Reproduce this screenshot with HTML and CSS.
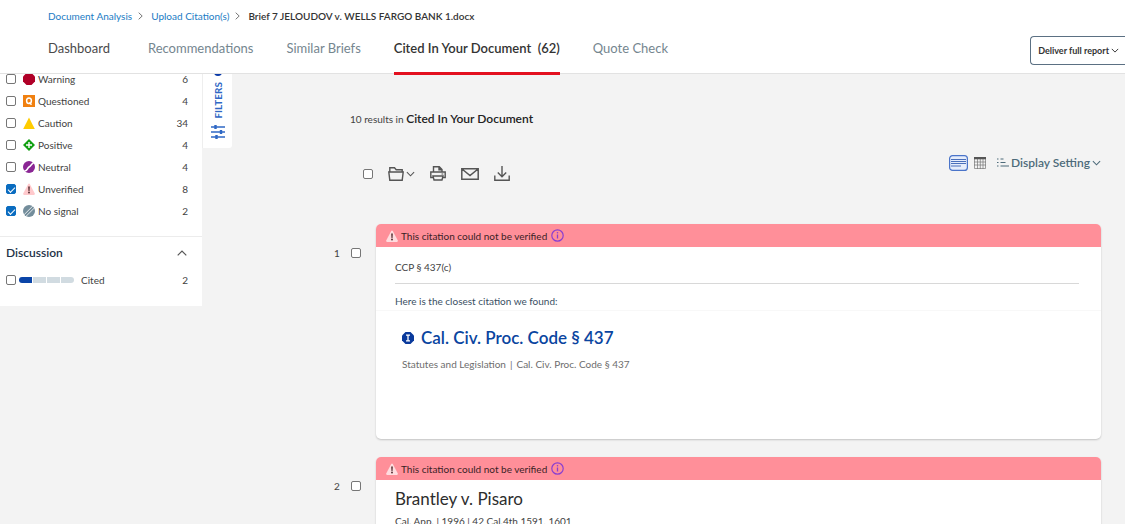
FILE: index.html
```html
<!DOCTYPE html>
<html lang="en">
<head>
<meta charset="utf-8">
<meta name="viewport" content="width=device-width, initial-scale=1">
<title>Brief Analysis - Cited In Your Document</title>
<link rel="stylesheet" href="styles.css">
</head>
<body>
<svg class="defs" aria-hidden="true">
  <symbol id="alert" viewBox="0 0 12 12"><path class="alert-shape" d="M5.2.9Q6 0 6.8.9L11.8 10.600Q12 12 11 12H1Q0 12 .2 10.600Z"/><path d="M5.200 3.500h1.600l-.3 4.500h-1z" fill="#4a2428"/><circle cx="6" cy="9.500" r=".9" fill="#4a2428"/></symbol>
  <symbol id="down" viewBox="0 0 10 6"><path d="M1 1l4 4 4-4" fill="none" stroke="currentColor" stroke-width="1.200"/></symbol>
  <symbol id="info" viewBox="0 0 13 13"><circle cx="6.500" cy="6.500" r="5.700" fill="none" stroke="#8a3fd0" stroke-width="1.200"/><path d="M6.500 5.600v4" stroke="#8a3fd0" stroke-width="1.300"/><circle cx="6.500" cy="3.800" r=".8" fill="#8a3fd0"/></symbol>
</svg>

<header class="header">
  <nav class="crumbs" aria-label="Breadcrumb">
    <a href="#">Document Analysis</a>
    <svg class="crumb-sep" viewBox="0 0 5 8"><path d="M.7.7L4.200 4 .7 7.300" fill="none" stroke="#777"/></svg>
    <a href="#">Upload Citation(s)</a>
    <svg class="crumb-sep" viewBox="0 0 5 8"><path d="M.7.7L4.200 4 .7 7.300" fill="none" stroke="#777"/></svg>
    <span class="crumb-current">Brief 7 JELOUDOV v. WELLS FARGO BANK 1.docx</span>
  </nav>
  <div class="header-row">
    <nav class="tabs" aria-label="Sections">
      <a class="tab tab-dark" href="#">Dashboard</a>
      <a class="tab" href="#">Recommendations</a>
      <a class="tab" href="#">Similar Briefs</a>
      <a class="tab tab-active" href="#" aria-current="page">Cited In Your Document &nbsp;(62)</a>
      <a class="tab" href="#">Quote Check</a>
    </nav>
    <button class="deliver" type="button">Deliver full report <svg class="chev-small"><use href="#down"/></svg></button>
  </div>
</header>

<div class="page">
  <aside class="sidebar">
    <ul class="filters">
      <li><label class="filter"><input class="check" type="checkbox"><svg class="signal" viewBox="0 0 12 12"><path d="M3.500 0h5L12 3.500v5L8.500 12h-5L0 8.500v-5z" fill="#b00028"/></svg><span>Warning</span><span class="count">6</span></label></li>
      <li><label class="filter"><input class="check" type="checkbox"><svg class="signal" viewBox="0 0 12 12"><path d="M0 0h12v12H0z" fill="#f08010"/><ellipse cx="6" cy="5.800" rx="2.400" ry="2.800" fill="none" stroke="#fff" stroke-width="1.500"/><path d="M6.300 7.500l2.200 2.300" stroke="#fff" stroke-width="1.400"/></svg><span>Questioned</span><span class="count">4</span></label></li>
      <li><label class="filter"><input class="check" type="checkbox"><svg class="signal" viewBox="0 0 12 12"><path d="M6 .5L11.800 12H.2z" fill="#fc0"/></svg><span>Caution</span><span class="count">34</span></label></li>
      <li><label class="filter"><input class="check" type="checkbox"><svg class="signal" viewBox="0 0 12 12"><path d="M6 0l6 6-6 6-6-6z" fill="#12a012"/><path d="M6 3v6M3 6h6" stroke="#fff" stroke-width="1.400"/></svg><span>Positive</span><span class="count">4</span></label></li>
      <li><label class="filter"><input class="check" type="checkbox"><svg class="signal" viewBox="0 0 12 12"><circle cx="6" cy="6" r="6" fill="#8a2594"/><path d="M1 10.500C5.500 9.500 4 7 6 6s2.500-3.500 5-4.500" fill="none" stroke="#fff" stroke-width="1.500"/></svg><span>Neutral</span><span class="count">4</span></label></li>
      <li><label class="filter"><input class="check" type="checkbox" checked><svg class="signal alert-pale"><use href="#alert"/></svg><span>Unverified</span><span class="count">8</span></label></li>
      <li><label class="filter"><input class="check" type="checkbox" checked><svg class="signal" viewBox="0 0 12 12"><circle cx="6" cy="6" r="6" fill="#738d9b"/><path d="M1 9.800L9.800 1M2.800 11.500l8.500-8.500" stroke="#fff" stroke-width=".8"/></svg><span>No signal</span><span class="count">2</span></label></li>
    </ul>
    <section class="discussion">
      <h2 class="discussion-head">Discussion
        <button class="collapse" type="button" aria-label="Collapse discussion"><svg class="chev-up" viewBox="0 0 10 6"><path d="M.7 5.300L5 1l4.300 4.300" fill="none" stroke="#555" stroke-width="1.200"/></svg></button>
      </h2>
      <label class="filter filter-meter"><input class="check" type="checkbox"><span class="meter"><i class="on"></i><i></i><i></i><i></i></span><span>Cited</span><span class="count">2</span></label>
    </section>
  </aside>

  <button class="filters-tab" type="button">
    <span class="filters-dot"></span>
    <span class="filters-text">FILTERS</span>
    <svg class="sliders" viewBox="0 0 14 14"><path d="M0 2h14M0 7h14M0 12h14" stroke="#2f68c5" stroke-width="1.400"/><path d="M4.500 0v4M10 5v4M5.500 10v4" stroke="#2f68c5" stroke-width="2.400"/></svg>
  </button>

  <main class="main">
    <h1 class="results">10 results in <strong>Cited In Your Document</strong></h1>
    <div class="toolbar">
      <div class="actions">
        <input class="check" type="checkbox" aria-label="Select all">
        <button class="tool tool-folder" type="button" aria-label="Save to folder"><svg class="i-folder" viewBox="0 0 16 14"><path d="M1.800 5V.8h4.700l1.700 2h6V5M.8 5h14.400l-1 8.200H1.800z" fill="none" stroke="currentColor" stroke-width="1.400"/></svg><svg class="chev"><use href="#down"/></svg></button>
        <button class="tool" type="button" aria-label="Print"><svg class="i-print" viewBox="0 0 16 15"><path d="M3.500 6V.8h5.800L12 3.500V6M9 .8v3h3M2.800 11.500H.8V6h14.400v5.500h-2M3 10h10l-1 4H4z" fill="none" stroke="currentColor" stroke-width="1.400"/><path d="M11.500 8h1.800" stroke="currentColor"/></svg></button>
        <button class="tool" type="button" aria-label="Email"><svg class="i-mail" viewBox="0 0 18 12"><path d="M.8.8h16.400v10.400H.8zM1 1l8 6.500L17 1" fill="none" stroke="currentColor" stroke-width="1.500"/></svg></button>
        <button class="tool" type="button" aria-label="Download"><svg class="i-down" viewBox="0 0 16 15"><path d="M8 0v10.500M3.800 6.500L8 10.700l4.200-4.200M.8 9.500v4.700h14.400V9.500" fill="none" stroke="currentColor" stroke-width="1.400"/></svg></button>
      </div>
      <div class="views">
        <button class="view" type="button" aria-label="List view" aria-pressed="true"><svg class="i-list" viewBox="0 0 19 16"><rect x=".6" y=".6" width="17.800" height="14.800" rx="3" fill="#e6edfb" stroke="#4a74c9" stroke-width="1.200"/><path d="M2 4.500h15M2 6.500h15M2 8.500h15M2 11h10" stroke="#4a6fba"/></svg></button>
        <button class="view" type="button" aria-label="Table view"><svg class="i-grid" viewBox="0 0 12 12"><path d="M.5.5h11v11H.5zM0 5h12M0 8h12M3.500 2v10M6.300 2v10M9 2v10" fill="none" stroke="#777" stroke-width=".7"/><path d="M0 0h12v2.300H0z" fill="#555"/></svg></button>
        <button class="display" type="button"><svg class="i-lines" viewBox="0 0 12 10"><path d="M0 1h1.500M0 4.500h1.500M0 8h1.500M3.500 1h3M3.500 4.500h5M3.500 8H12" stroke="currentColor" stroke-width="1.200"/></svg>Display Setting<svg class="chev"><use href="#down"/></svg></button>
      </div>
    </div>

    <ol class="list">
      <li class="item">
        <label class="pick"><span class="num">1</span><input class="check" type="checkbox"></label>
        <article class="card">
          <div class="banner"><svg class="signal alert-light"><use href="#alert"/></svg>This citation could not be verified<button class="info" type="button" aria-label="More information"><svg class="i-info"><use href="#info"/></svg></button></div>
          <div class="original">
            <p class="cite">CCP § 437(c)</p>
            <p class="closest">Here is the closest citation we found:</p>
          </div>
          <div class="match">
            <h2 class="match-title"><svg class="signal" viewBox="0 0 12 12"><path d="M3.500 0h5L12 3.500v5L8.500 12h-5L0 8.500v-5z" fill="#0a3a9c"/><path d="M4 3.200h4M4 8.800h4M6 3.200v5.600" stroke="#fff" stroke-width="1.300"/></svg><a href="#">Cal. Civ. Proc. Code § 437</a></h2>
            <p class="meta"><span>Statutes and Legislation</span><span>|</span><span>Cal. Civ. Proc. Code § 437</span></p>
          </div>
        </article>
      </li>
      <li class="item">
        <label class="pick"><span class="num">2</span><input class="check" type="checkbox"></label>
        <article class="card">
          <div class="banner"><svg class="signal alert-light"><use href="#alert"/></svg>This citation could not be verified<button class="info" type="button" aria-label="More information"><svg class="i-info"><use href="#info"/></svg></button></div>
          <div class="case">
            <h2 class="case-title">Brantley v. Pisaro</h2>
            <p class="case-meta">Cal. App. | 1996 | 42 Cal.4th 1591, 1601</p>
          </div>
        </article>
      </li>
    </ol>
  </main>
</div>
</body>
</html>
```
FILE: styles.css
```css
* { box-sizing: border-box; }
body {
  margin: 0;
  height: 100vh;
  display: flex;
  flex-direction: column;
  overflow: hidden;
  background: #f3f3f3;
  color: #424242;
  font: 10px/16px Lato, "Open Sans", sans-serif;
}
h1, h2, p, ul, ol { margin: 0; padding: 0; font-weight: 400; }
ul, ol { list-style: none; }
a { color: inherit; text-decoration: none; }
button { border: 0; padding: 0; background: none; color: inherit; font: inherit; display: flex; align-items: center; }
svg { display: block; flex: none; }
.defs { position: absolute; width: 0; height: 0; }

.header {
  flex: none;
  position: relative;
  z-index: 1;
  background: #fff;
  border-bottom: 1px solid #e2e2e2;
  padding-left: 48px;
}
.crumbs { display: flex; align-items: center; padding-top: 8px; color: #1a7bc4; }
.crumb-sep { width: 5px; height: 8px; margin: 0 8px 0 6px; }
.crumb-current { color: #333; font-weight: 600; }
.header-row { display: flex; justify-content: space-between; height: 49px; }
.tabs { display: flex; gap: 33px; margin-bottom: -2px; }
.tab { padding-top: 15px; font-size: 13px; line-height: 18px; color: #75868f; white-space: nowrap; }
.tab-dark { color: #4a4a4a; }
.tab-dark + .tab { margin-left: 5px; }
.tab-active { color: #333; font-weight: 600; border-bottom: 3px solid #e3101f; }
.deliver {
  align-self: flex-start;
  height: 29px;
  margin-top: 12px;
  padding: 0 6px 0 7px;
  gap: 2px;
  border: 1px solid #5b7083;
  border-right: 0;
  border-radius: 4px 0 0 4px;
  font-size: 9px;
  font-weight: 700;
  color: #333;
}
.chev-small { width: 8px; height: 5px; }
.chev { width: 9px; height: 6px; }

.page { flex: 1; min-height: 0; display: flex; align-items: flex-start; }
.sidebar { flex: none; width: 202px; margin-top: -6px; background: #fff; }
.filters { padding-bottom: 14px; }
.filter { display: flex; align-items: center; height: 22px; padding: 0 14px 0 6px; }
.count { margin-left: auto; }
.signal { width: 12px; height: 12px; margin: 0 3px 0 7px; }
.check {
  appearance: none;
  flex: none;
  width: 10px;
  height: 10px;
  margin: 0;
  border: 1px solid #767676;
  border-radius: 2px;
  background: #fff;
}
.check:checked {
  border-color: #0a6cc0;
  background: #0a6cc0;
  display: grid;
  place-items: center;
}
.check:checked::after {
  content: "";
  width: 6px;
  height: 3px;
  border: solid #fff;
  border-width: 0 0 1px 1px;
  transform: rotate(-45deg);
}
.alert-pale { fill: #ffc9cc; }
.alert-light { fill: #ffdcdf; }
.discussion { border-top: 1px solid #ececec; padding: 8px 0 15px; }
.discussion-head { display: flex; justify-content: space-between; align-items: center; padding: 0 15px 0 6px; font-size: 12px; font-weight: 600; color: #1e3348; }
.chev-up { width: 10px; height: 6px; }
.filter-meter { margin-top: 8px; }
.meter { display: flex; gap: 1px; width: 55px; height: 6px; margin: 0 7px 0 3px; border-radius: 3px; overflow: hidden; }
.meter i { flex: 1; background: #d1dbe1; }
.meter .on { background: #0a45a8; }

.filters-tab {
  flex: none;
  flex-direction: column;
  width: 30px;
  margin-top: -6px;
  padding-bottom: 9px;
  background: #fff;
  border-left: 1px solid #eee;
  border-radius: 0 0 3px 0;
  color: #2f68c5;
  font-weight: 700;
}
.filters-dot { width: 8px; height: 8px; border-radius: 50%; background: #0a3aa8; }
.filters-text { writing-mode: vertical-rl; transform: rotate(180deg); margin: 6px 0; }
.sliders { width: 14px; height: 14px; }

.main { flex: 1; min-width: 0; padding: 36px 24px 0 102px; }
.results { padding-left: 16px; font-size: 10px; line-height: 18px; }
.results strong { font-size: 12px; font-weight: 600; color: #222; }
.toolbar { display: flex; justify-content: space-between; align-items: flex-start; padding: 26px 0 0 29px; }
.actions { display: flex; align-items: center; padding-top: 12px; color: #555; }
.tool { margin-left: 15px; }
.tool-folder { gap: 2px; }
.i-folder { width: 16px; height: 14px; }
.i-print { width: 16px; height: 15px; }
.i-mail { width: 18px; height: 12px; }
.i-down { width: 16px; height: 15px; }
.views { display: flex; align-items: center; }
.view { margin-right: 6px; }
.i-list { width: 19px; height: 16px; }
.i-grid { width: 12px; height: 12px; }
.display { margin-left: 5px; gap: 2px; font-size: 12px; line-height: 18px; font-weight: 600; color: #4d6b7a; }
.i-lines { width: 12px; height: 10px; }

.list { display: grid; gap: 18px; margin-top: 43px; }
.item { display: flex; align-items: flex-start; }
.pick { display: flex; align-items: center; gap: 10px; width: 42px; padding-top: 21px; flex: none; }
.num { width: 7px; }
.card { flex: 1; min-width: 0; border-radius: 5px; overflow: hidden; background: #fff; box-shadow: 0 1px 2px #0003; }
.banner { display: flex; align-items: center; height: 23px; padding-left: 3px; background: #ff8f99; color: #3a2226; }
.info { margin-left: 4px; }
.i-info { width: 13px; height: 13px; }
.original { padding: 12px 22px 1px 19px; border-bottom: 1px solid #f8f8f8; }
.cite { padding-bottom: 8px; border-bottom: 1px solid #d8d8d8; }
.closest { padding-top: 9px; color: #3a4f63; }
.match { padding: 15px 19px 67px; }
.match-title { display: flex; align-items: center; font-size: 17px; line-height: 24px; font-weight: 600; color: #0a45a0; }
.match-title a { margin-left: 4px; }
.meta { display: flex; gap: 4px; padding: 6px 0 0 7px; color: #6d6d6d; }
.case { padding: 7px 19px 20px; }
.case-title { font-size: 17px; line-height: 24px; color: #2d2d2d; }
.case-meta { padding-top: 2px; }
```
